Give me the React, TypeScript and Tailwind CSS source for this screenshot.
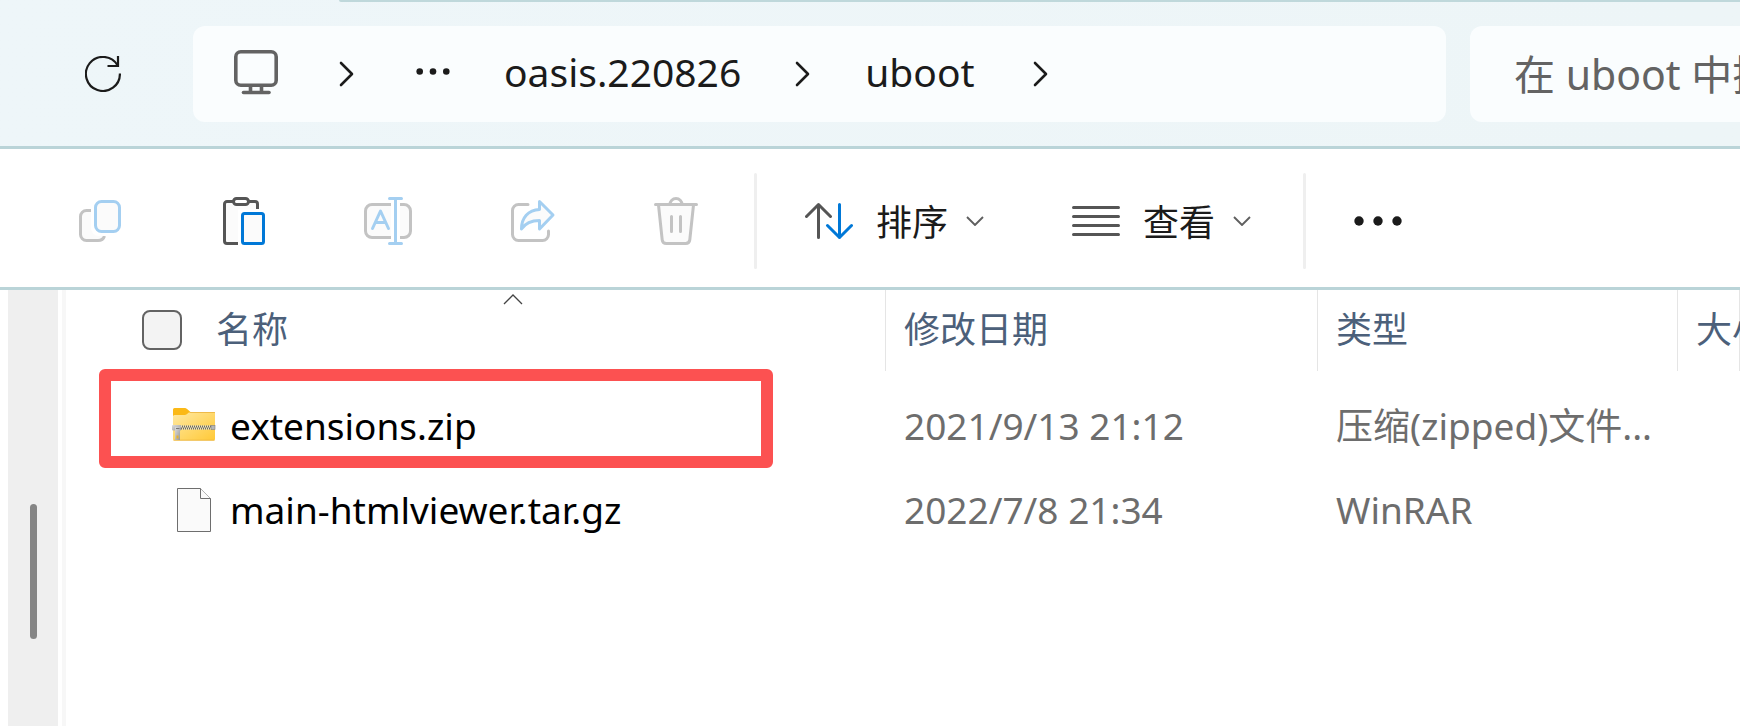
import type { ReactNode } from "react";

const files = [
  { name: "extensions.zip", date: "2021/9/13 21:12", type: "压缩(zipped)文件...", icon: <ZipIcon />, marked: true },
  { name: "main-htmlviewer.tar.gz", date: "2022/7/8 21:34", type: "WinRAR", icon: <FileIcon />, marked: false },
];

const columns = ["修改日期", "类型", "大小"];

function RefreshIcon() {
  return (
    <svg className="h-9 w-9" viewBox="0 0 36 36" fill="none" stroke="#1b1b1b" strokeWidth="2.2">
      <path d="M34.9 17.5A17 17 0 1 1 32.6 9.4" />
      <path d="M22.5 10H33V0" />
    </svg>
  );
}

function MonitorIcon() {
  return (
    <svg className="h-[45px] w-11" viewBox="0 0 44 45" fill="none" stroke="#636363" strokeWidth="3.6">
      <rect x="1.8" y="1.8" width="40.4" height="33.5" rx="5" />
      <path d="M16.5 35v7M27.5 35v7" />
      <path d="M9.5 42.5h25.5" strokeLinecap="round" />
    </svg>
  );
}

function Crumb() {
  return (
    <svg className="h-[26px] w-4" viewBox="0 0 16 26" fill="none" stroke="#1b1b1b" strokeWidth="2.6" strokeLinecap="round" strokeLinejoin="round">
      <path d="M2 2l11 11L2 24" />
    </svg>
  );
}

function Caret() {
  return (
    <svg className="h-[10px] w-[18px]" viewBox="0 0 18 10" fill="none" stroke="#5f5f5f" strokeWidth="1.9">
      <path d="M1 1l8 8 8-8" />
    </svg>
  );
}

function ToolIcon({ children }: { children: ReactNode }) {
  return (
    <svg className="h-12 w-12" viewBox="0 0 48 48" fill="none" strokeWidth="3" strokeLinejoin="round">
      {children}
    </svg>
  );
}

function CopyIcon() {
  return (
    <ToolIcon>
      <path d="M15 13.5h-4.500a6 6 0 0 0-6 6v18a6 6 0 0 0 6 6H22c3.2 0 5.6-1.6 6.5-4.5" stroke="#c3c3c3" fill="#fbfbfb" />
      <rect x="15" y="1" width="31" height="38" rx="8" fill="#fff" />
      <rect x="19.5" y="4.5" width="24" height="30" rx="6" stroke="#a4cff1" fill="#fbfbfb" />
    </ToolIcon>
  );
}

function PasteIcon() {
  return (
    <ToolIcon>
      <path d="M18 46.5H7a2.5 2.5 0 0 1-2.5-2.5V7A2.5 2.5 0 0 1 7 4.5h28A2.5 2.5 0 0 1 37.5 7v5" stroke="#555" fill="#fbfbfb" />
      <rect x="18" y="12.5" width="30" height="36" fill="#fff" />
      <rect x="13.5" y="1.5" width="15" height="6" rx="3" stroke="#555" fill="#fff" />
      <rect x="22.5" y="16.5" width="21" height="30" rx="2" stroke="#0078d7" fill="#fbfbfb" />
    </ToolIcon>
  );
}

function RenameIcon() {
  return (
    <ToolIcon>
      <path d="M27 7.5H8A6.5 6.5 0 0 0 1.5 14v20A6.5 6.5 0 0 0 8 40.5h19M36 7.5h4a6.5 6.5 0 0 1 6.5 6.5v20a6.5 6.5 0 0 1-6.5 6.5h-4" stroke="#c3c3c3" fill="#fbfbfb" />
      <path d="M31.5 1.5v45M25.5 1.5h12M25.5 46.5h12M8.5 31.5l8-17.500 8 17.500M11.5 25.5h10" stroke="#a4cff1" strokeLinecap="round" />
    </ToolIcon>
  );
}

function ShareIcon() {
  return (
    <ToolIcon>
      <path d="M20 7.5h-9.500a6 6 0 0 0-6 6v24a6 6 0 0 0 6 6h24a6 6 0 0 0 6-6V34" stroke="#c3c3c3" strokeLinecap="round" />
      <path d="M31.5 4.5L45 18 31.5 32v-8.500c-8.500 0-14 2.500-18 8.500 0-11 6.500-19 18-19.500z" stroke="#a4cff1" fill="#fbfbfb" />
    </ToolIcon>
  );
}

function TrashIcon() {
  return (
    <ToolIcon>
      <path d="M6.5 8l3.7 34.800a4.200 4.200 0 0 0 4.200 3.700h19.200a4.200 4.200 0 0 0 4.200-3.700L41.500 8" stroke="#c3c3c3" fill="#fbfbfb" />
      <path d="M3.5 7.5h41M18 7.5a6 6 0 0 1 12 0M19.5 19.5v15M28.5 19.5v15" stroke="#c3c3c3" strokeLinecap="round" />
    </ToolIcon>
  );
}

function SortIcon() {
  return (
    <ToolIcon>
      <path d="M13.5 40.5v-33M1.5 19.5l12-12 12 12" stroke="#555" strokeLinecap="round" />
      <path d="M34.5 7.5v33M22.5 28.5l12 12 12-12" stroke="#0078d7" strokeLinecap="round" />
    </ToolIcon>
  );
}

function ListIcon() {
  return (
    <ToolIcon>
      <path d="M1.5 10.5h45M1.5 19.5h45M1.5 28.5h45M1.5 37.5h45" stroke="#555" strokeLinecap="round" />
    </ToolIcon>
  );
}

function ZipIcon() {
  return (
    <svg className="h-11 w-11" viewBox="0 -3 44 44">
      <defs>
        <linearGradient id="folder" x1="0" y1="0" x2="1" y2="1">
          <stop offset="0" stopColor="#ffe9a3" />
          <stop offset="1" stopColor="#ffc937" />
        </linearGradient>
        <linearGradient id="metal" x1="0" y1="0" x2="1" y2="1">
          <stop offset="0" stopColor="#dcdcdc" />
          <stop offset="1" stopColor="#9a9a9a" />
        </linearGradient>
      </defs>
      <path d="M1 8V2.5A1.5 1.5 0 0 1 2.5 1H12c1.5 0 2.5.4 3.4 1.3L19 5.5 14 9H1z" fill="#fbb917" />
      <path d="M1 9.5A1.5 1.5 0 0 1 2.5 8H12c1.3 0 2.2-.3 3-1l1.5-1.3c.5-.4 1-.7 1.8-.7H42a1 1 0 0 1 1 1v26a1.5 1.5 0 0 1-1.5 1.5h-39A1.5 1.5 0 0 1 1 32z" fill="url(#folder)" />
      <path d="M17.5 5.5H43M1.5 33.2h41" stroke="#eab13c" strokeWidth=".8" />
      <path d="M8 20.5h32" stroke="#eee3b8" strokeWidth="4" />
      <path d="M8 19.5h32" stroke="#6c6a63" strokeWidth="1.8" strokeDasharray="1 1" />
      <path d="M9 21.5h31" stroke="#6c6a63" strokeWidth="1.8" strokeDasharray="1 1" />
      <rect x="39" y="18.5" width="4" height="4" fill="#b5b5b5" stroke="#808080" strokeWidth=".6" />
      <rect x="0" y="18" width="9" height="5.5" rx="1" fill="url(#metal)" />
      <path d="M3 20h5v13H3z" fill="url(#metal)" />
      <rect x="4.5" y="28.5" width="2" height="3" fill="#e7b22d" />
      <path d="M4 21.5h3.5" stroke="#777" />
    </svg>
  );
}

function FileIcon() {
  return (
    <svg className="h-11 w-11" viewBox="0 0 44 44" fill="#fafafa" stroke="#6e6e6e">
      <path d="M5.5.5h23l10 10v33h-33z" />
      <path d="M28.5.5v10h10" />
    </svg>
  );
}

function Dots({ className }: { className: string }) {
  return (
    <svg className={className} viewBox="0 0 48 10" fill="#1b1b1b">
      <circle cx="5" cy="5" r="4.7" />
      <circle cx="24" cy="5" r="4.7" />
      <circle cx="43" cy="5" r="4.7" />
    </svg>
  );
}

const tools = [
  { label: "复制", icon: <CopyIcon />, disabled: true },
  { label: "粘贴", icon: <PasteIcon />, disabled: false },
  { label: "重命名", icon: <RenameIcon />, disabled: true },
  { label: "共享", icon: <ShareIcon />, disabled: true },
  { label: "删除", icon: <TrashIcon />, disabled: true },
];

function AddressBar() {
  return (
    <header className="border-b-[3px] border-[#bad4d8] bg-linear-to-r from-[#eef6f9] to-[#edf5f7]">
      <div className="ml-[339px] h-[2px] rounded-bl-full bg-[#bfd8db]" />
      <div className="flex py-6">
        <div className="flex w-[193px] shrink-0 items-center pl-[85px]">
          <button type="button" aria-label="刷新">
            <RefreshIcon />
          </button>
        </div>
        <nav className="flex h-24 min-w-0 flex-1 items-center rounded-xl bg-[#fafdfe] pl-[41px] text-[39px] text-[#1b1b1b]">
          <button type="button" aria-label="此电脑" className="pb-[3px]">
            <MonitorIcon />
          </button>
          <span className="ml-[61px]"><Crumb /></span>
          <button type="button" aria-label="更多" className="ml-[61px] pb-[6px]">
            <Dots className="h-[7px] w-[34px]" />
          </button>
          <a href="#oasis" className="ml-[54px] pb-[3px]">oasis.220826</a>
          <span className="ml-[54px]"><Crumb /></span>
          <a href="#uboot" className="ml-[54px] pb-[3px]">uboot</a>
          <span className="ml-[58px]"><Crumb /></span>
        </nav>
        <input
          type="text"
          aria-label="搜索"
          placeholder="在 uboot 中搜索"
          className="-mr-[130px] ml-6 h-24 w-[400px] shrink-0 rounded-xl bg-[#fafdfe] pl-11 text-[41px] outline-none placeholder:text-[#636363]"
        />
      </div>
    </header>
  );
}

function Divider() {
  return <div className="h-24 w-[3px] shrink-0 rounded-full bg-[#efefef]" />;
}

function Toolbar() {
  return (
    <div className="flex h-[141px] items-center border-b-[3px] border-[#bad4d8] bg-white pt-[6px] pl-7 text-[36px] text-[#1b1b1b]">
      {tools.map((tool) => (
        <button key={tool.label} type="button" aria-label={tool.label} disabled={tool.disabled} className="flex h-24 w-36 shrink-0 items-center justify-center">
          {tool.icon}
        </button>
      ))}
      <div className="flex items-center gap-1 pl-[6px]">
        <Divider />
        <button type="button" className="flex h-24 items-center px-11 whitespace-nowrap">
          <SortIcon />
          <span className="mr-[18px] ml-[23px] pt-1">排序</span>
          <Caret />
        </button>
      </div>
      <button type="button" className="flex h-24 items-center px-11 whitespace-nowrap">
        <ListIcon />
        <span className="mr-[18px] ml-[23px] pt-1">查看</span>
        <Caret />
      </button>
      <div className="flex items-center gap-12 pl-2">
        <Divider />
        <button type="button" aria-label="更多选项">
          <Dots className="h-[10px] w-12" />
        </button>
      </div>
    </div>
  );
}

function FileTable() {
  return (
    <table className="w-full table-fixed border-collapse text-left text-[37px] text-[#6d6d6d]">
      <colgroup>
        <col className="w-[820px]" />
        <col className="w-[432px]" />
        <col className="w-[360px]" />
        <col />
      </colgroup>
      <thead className="text-[36px] text-[#4c607a]">
        <tr>
          <th className="relative p-0 pb-[14px] font-normal">
            <div className="flex h-[81px] items-center gap-[34px] border-r border-[#e5e5e5] pb-[2px] pl-[76px]">
              <input type="checkbox" aria-label="全选" className="h-10 w-10 appearance-none rounded-lg border-2 border-[#636363] bg-[#f3f3f3]" />
              <span>名称</span>
            </div>
            <svg className="absolute top-1 left-[437px] h-[11px] w-5" viewBox="0 0 20 11" fill="none" stroke="#444" strokeWidth="1.3">
              <path d="M1 10l9-9 9 9" />
            </svg>
          </th>
          {columns.map((column) => (
            <th key={column} className="p-0 pb-[14px] font-normal whitespace-nowrap">
              <div className="flex h-[81px] items-center border-r border-[#e5e5e5] pb-[2px] pl-[18px]">{column}</div>
            </th>
          ))}
        </tr>
      </thead>
      <tbody>
        {files.map((file) => (
          <tr key={file.name} className="h-[84px] whitespace-nowrap">
            <td className="relative p-0 pb-[3px] pl-[106px]">
              <div className="flex items-center gap-[14px]">
                {file.icon}
                <span className="text-black">{file.name}</span>
              </div>
              {file.marked && <div className="absolute -top-4 left-[33px] h-[99px] w-[674px] rounded-md border-12 border-[#fc5151]" />}
            </td>
            <td className="p-0 pb-[3px] pl-[18px]">{file.date}</td>
            <td className="p-0 pb-[3px] pl-[18px]">{file.type}</td>
            <td />
          </tr>
        ))}
      </tbody>
    </table>
  );
}

export default function App() {
  return (
    <div className="flex h-screen flex-col overflow-hidden bg-white font-['Noto_Sans','Noto_Sans_CJK_SC',sans-serif]">
      <AddressBar />
      <Toolbar />
      <main className="flex min-h-0 flex-1">
        <div className="ml-2 w-[50px] shrink-0 bg-[#efefef] pt-[214px] pl-[22px]">
          <div className="h-[135px] w-[7px] rounded-full bg-[#858585]" />
        </div>
        <div className="ml-1 w-1 shrink-0 bg-[#f7f7f7]" />
        <div className="min-w-0 flex-1">
          <FileTable />
        </div>
      </main>
    </div>
  );
}
